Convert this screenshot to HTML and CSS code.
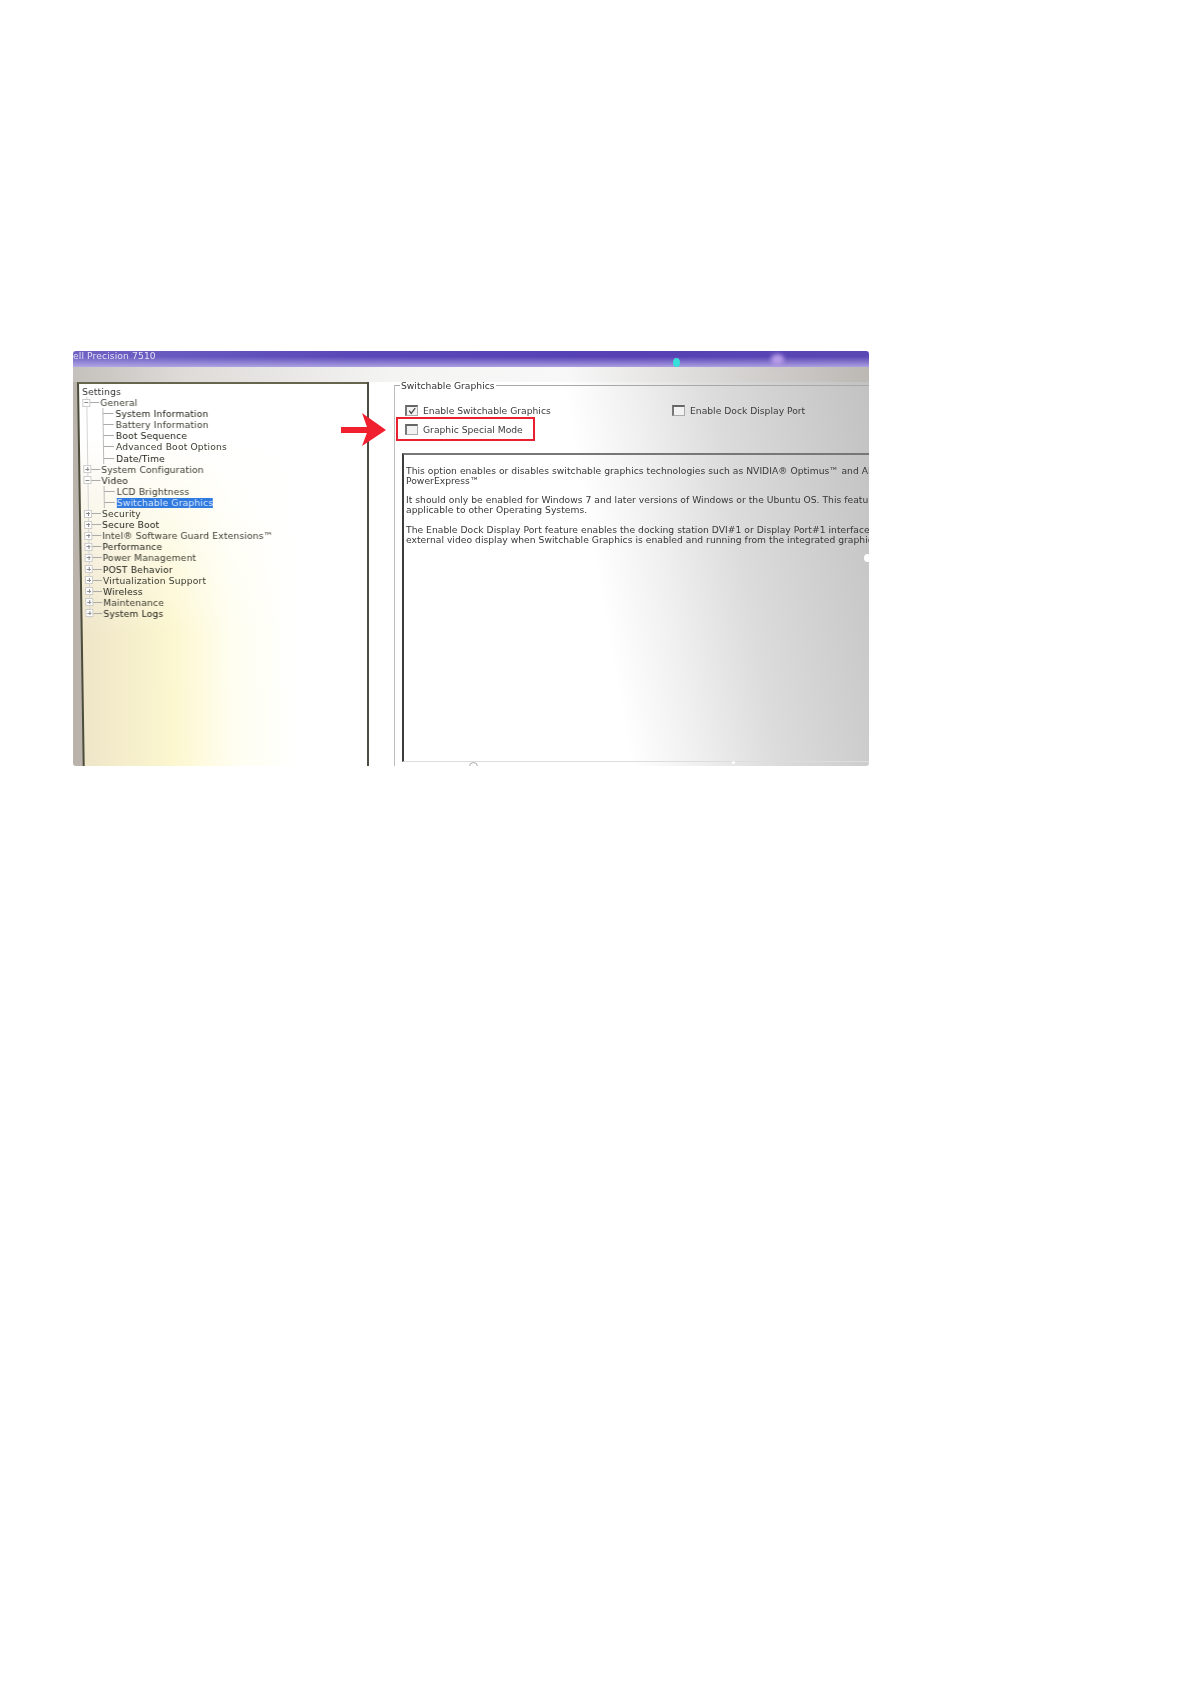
FILE: index.html
```html
<!DOCTYPE html>
<html lang="en">
<head>
<meta charset="utf-8">
<title>Switchable Graphics</title>
<link rel="stylesheet" href="styles.css">
</head>
<body>
<figure class="photo">
  <div class="titlebar"><span class="title-text">ell Precision 7510</span></div>
  <div class="toolbar"></div>
  <div class="workspace">
    <nav class="tree-panel">
      <div class="tree-frame">
        <div class="tree-root">Settings</div>
        <ul class="tree">
          <li class="open">
            <div class="row"><span class="expander minus"></span><span class="dash"></span><span>General</span></div>
            <ul class="children">
              <li class="strong">System Information</li>
              <li>Battery Information</li>
              <li class="strong">Boot Sequence</li>
              <li>Advanced Boot Options</li>
              <li class="strong">Date/Time</li>
            </ul>
          </li>
          <li><div class="row"><span class="expander"></span><span class="dash"></span><span>System Configuration</span></div></li>
          <li class="open">
            <div class="row"><span class="expander minus"></span><span class="dash"></span><span class="strong">Video</span></div>
            <ul class="children">
              <li>LCD Brightness</li>
              <li><span class="selected">Switchable Graphics</span></li>
            </ul>
          </li>
          <li><div class="row"><span class="expander"></span><span class="dash"></span><span>Security</span></div></li>
          <li><div class="row"><span class="expander"></span><span class="dash"></span><span class="strong">Secure Boot</span></div></li>
          <li><div class="row"><span class="expander"></span><span class="dash"></span><span>Intel® Software Guard Extensions™</span></div></li>
          <li><div class="row"><span class="expander"></span><span class="dash"></span><span class="strong">Performance</span></div></li>
          <li><div class="row"><span class="expander"></span><span class="dash"></span><span>Power Management</span></div></li>
          <li><div class="row"><span class="expander"></span><span class="dash"></span><span class="strong">POST Behavior</span></div></li>
          <li><div class="row"><span class="expander"></span><span class="dash"></span><span>Virtualization Support</span></div></li>
          <li><div class="row"><span class="expander"></span><span class="dash"></span><span class="strong">Wireless</span></div></li>
          <li><div class="row"><span class="expander"></span><span class="dash"></span><span>Maintenance</span></div></li>
          <li><div class="row"><span class="expander"></span><span class="dash"></span><span class="strong">System Logs</span></div></li>
        </ul>
      </div>
    </nav>
    <section class="pane">
      <fieldset class="group">
        <legend class="group-title">Switchable Graphics</legend>
        <div class="options">
          <label class="option option-wide">
            <span class="box"><svg viewBox="0 0 12 10" class="tick"><path d="M2.5 4.5 L5 8 L10 1.5" fill="none" stroke="#444" stroke-width="1.5"/></svg></span>
            <span>Enable Switchable Graphics</span>
          </label>
          <label class="option">
            <span class="box"></span>
            <span>Enable Dock Display Port</span>
          </label>
        </div>
        <label class="option callout">
          <span class="box"></span>
          <span>Graphic Special Mode</span>
        </label>
        <div class="description">
          <p>This option enables or disables switchable graphics technologies such as NVIDIA® Optimus™ and AMD<br>PowerExpress™</p>
          <p>It should only be enabled for Windows 7 and later versions of Windows or the Ubuntu OS. This feature is not<br>applicable to other Operating Systems.</p>
          <p>The Enable Dock Display Port feature enables the docking station DVI#1 or Display Port#1 interface to drive an<br>external video display when Switchable Graphics is enabled and running from the integrated graphics</p>
        </div>
      </fieldset>
    </section>
  </div>
  <svg class="arrow" viewBox="0 0 46 34" aria-hidden="true">
    <path d="M0 14 H30 V20 H0 Z" fill="#f0202f"/>
    <path d="M21 0 L45 17 L21 33 L27 17 Z" fill="#f0202f"/>
  </svg>
  <span class="glare glare-cyan"></span>
  <span class="glare glare-lilac"></span>
  <span class="glare glare-dot"></span>
  <span class="glare glare-edge"></span>
  <span class="glare glare-ring"></span>
</figure>
</body>
</html>
```
FILE: styles.css
```css
* { box-sizing: border-box; }
html, body { margin: 0; padding: 0; background: #fff; }
body { height: 1684px; padding: 351px 0 0 73px; font-family: "DejaVu Sans", sans-serif; }

.photo {
  position: relative;
  margin: 0;
  width: 796px;
  height: 415px;
  overflow: hidden;
  border-radius: 3px;
  display: flex;
  flex-direction: column;
  color: #3a3a30;
  font-size: 9.2px;
  background: #fff;
}

.titlebar {
  height: 16px;
  flex: none;
  background:
    linear-gradient(to bottom, rgba(255,255,255,0) 35%, rgba(200,190,240,.75) 100%),
    linear-gradient(to right, #6f62c4 0, #5a48b8 35%, #5640b4 70%, #5a48b4 100%);
}
.title-text {
  display: block;
  font-size: 9.2px;
  line-height: 10px;
  letter-spacing: .1px;
  color: #e4def4;
  filter: blur(.45px);
}

.toolbar {
  height: 15px;
  flex: none;
  background: linear-gradient(to right, #c4c0bc 0, #dedbd8 14%, #f4f4f3 40%, #f8f8f8 62%, #d8d6d4 82%, #bcb8b4 100%);
}

.workspace { flex: 1; display: flex; min-height: 0; }

.tree-panel {
  flex: none;
  width: 296px;
  overflow: hidden;
  padding-left: 4px;
  background: #b9b3ac;
  border-right: 2px solid #4c4c40;
}
.tree-frame {
  height: 120%;
  margin-right: -10px;
  padding: 2px 0 0 3px;
  border-top: 2px solid #66664e;
  border-left: 2px solid #4c4c3a;
  transform: skewX(.85deg);
  transform-origin: top left;
  background:
    linear-gradient(to bottom, #fff 12%, rgba(255,255,255,0) 55%),
    linear-gradient(to right, #efe5c8 0, #fcf7cf 30%, #fffef0 50%, #fff 72%);
  font-size: 9.2px;
  line-height: 11.1px;
  letter-spacing: .15px;
  white-space: nowrap;
  filter: blur(.45px);
}
.tree-root { color: #333; }
.tree, .children { list-style: none; margin: 0; padding: 0; }
.tree { background: linear-gradient(#d4d4d4, #d4d4d4) 3.5px 0 / 1px 100% no-repeat; }
.row { display: flex; align-items: center; height: 11.1px; }
.expander {
  position: relative;
  width: 8px;
  height: 8px;
  flex: none;
  border: 1px solid #ccc;
  background:
    linear-gradient(#888, #888) center / 4px 1px no-repeat,
    linear-gradient(#888, #888) center / 1px 4px no-repeat,
    #fff;
}
.expander.minus { background: linear-gradient(#888, #888) center / 4px 1px no-repeat, #fff; }
.dash { width: 9px; height: 1px; margin-right: 1px; flex: none; background: #aaa; }
.children { margin-left: 20px; border-left: 1px solid #bbb; padding-left: 12px; position: relative; }
.children li { position: relative; height: 11.1px; }
.children li::before {
  content: "";
  position: absolute;
  left: -12px;
  top: 5px;
  width: 10px;
  height: 1px;
  background: #aaa;
}
.strong { color: #22221a; font-weight: 500; }
.selected {
  display: inline-block;
  background: #2f7ae0;
  color: #dde9fb;
  line-height: 10px;
}

.pane {
  flex: 1;
  min-width: 0;
  padding-left: 25px;
  background: linear-gradient(80deg, #fff 0, #fff 46%, #f0f0f0 58%, #dcdcdc 72%, #c2c2c2 100%);
}

.group {
  margin: -2px 0 0;
  padding: 0 0 0 10px;
  min-width: 0;
  height: 400px;
  border: 0;
  border-top: 1px solid #a8a8a8;
  border-left: 1px solid #bdbdbd;
}
.group-title {
  margin-left: -5px;
  padding: 0 1px;
  font-size: 9.2px;
  line-height: 11px;
  color: #333;
  filter: blur(.4px);
}

.options { display: flex; margin-top: 13px; }
.option {
  display: flex;
  align-items: center;
  gap: 5px;
  height: 12px;
  white-space: nowrap;
  font-size: 9.2px;
  color: #3c3c3c;
}
.option > span:last-child { filter: blur(.4px); }
.option-wide { width: 267px; }
.box {
  display: block;
  flex: none;
  width: 13px;
  height: 11px;
  border: 1px solid #aaa;
  border-top: 2px solid #666;
  border-left: 2px solid #777;
  background: #f2f2f2;
}
.tick { display: block; width: 100%; height: 100%; }

.callout {
  height: 24px;
  width: 139px;
  margin: 1px 0 0 -9px;
  padding-left: 7px;
  border: 2.5px solid #e8202f;
}

.description {
  margin: 12px 0 0 -3px;
  height: 309px;
  padding: 11px 0 0 2px;
  border-top: 2px solid #777;
  border-left: 2px solid #3c3c3c;
  border-bottom: 1px solid #ddd;
  font-size: 9.2px;
  line-height: 9.8px;
  letter-spacing: .02px;
  color: #383838;
  white-space: nowrap;
  filter: blur(.4px);
}
.description p { margin: 0 0 9.8px; }

.arrow { position: absolute; left: 268px; top: 62px; width: 46px; height: 34px; }

.glare { position: absolute; border-radius: 50%; }
.glare-cyan { left: 600px; top: 7px; width: 7px; height: 9px; background: #36e0d8; filter: blur(.6px); }
.glare-lilac { left: 698px; top: 3px; width: 13px; height: 11px; background: #b89ce8; filter: blur(2px); }
.glare-dot { left: 659px; top: 410px; width: 3px; height: 3px; background: #fff; }
.glare-edge { left: 791px; top: 203px; width: 7px; height: 8px; background: #fff; filter: blur(.5px); }
.glare-ring { left: 396px; top: 411px; width: 9px; height: 9px; border: 1px solid #aaa; background: #fff; }
```
